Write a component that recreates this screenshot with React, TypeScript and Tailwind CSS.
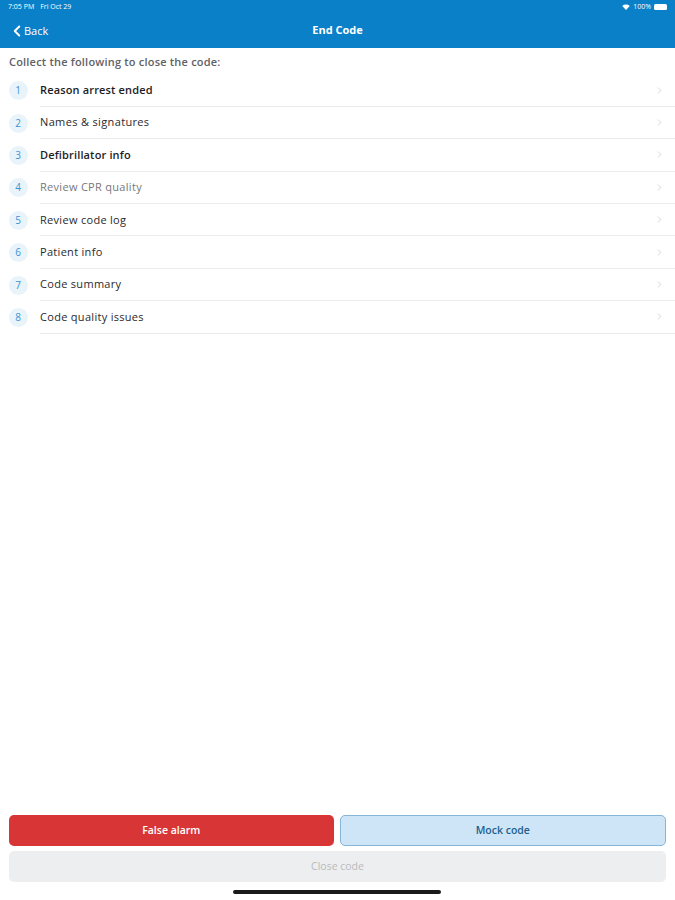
import React from 'react';
import { ChevronLeft, ChevronRight } from 'lucide-react';

const items = [
  { n: 1, label: 'Reason arrest ended', tone: 'font-semibold text-[#1d1d1f] tracking-[0.15px]' },
  { n: 2, label: 'Names & signatures', tone: 'font-medium text-[#2a2a2c] tracking-[0.35px]' },
  { n: 3, label: 'Defibrillator info', tone: 'font-semibold text-[#1d1d1f] tracking-[0.15px]' },
  { n: 4, label: 'Review CPR quality', tone: 'font-normal text-[#77787b] tracking-[0.3px]' },
  { n: 5, label: 'Review code log', tone: 'font-medium text-[#2a2a2c] tracking-[0.3px]' },
  { n: 6, label: 'Patient info', tone: 'font-medium text-[#2a2a2c] tracking-[0.3px]' },
  { n: 7, label: 'Code summary', tone: 'font-medium text-[#2a2a2c] tracking-[0.3px]' },
  { n: 8, label: 'Code quality issues', tone: 'font-medium text-[#2a2a2c] tracking-[0.3px]' },
];

const StatusBar = () => (
  <div className="h-[14px] flex items-center justify-between px-[8px] text-[7px] text-white">
    <div className="flex gap-[6px]">
      <span>7:05 PM</span>
      <span>Fri Oct 29</span>
    </div>
    <div className="flex items-center gap-[3px]">
      <svg width="8" height="6" viewBox="0 0 16 12">
        <path d="M8 12 L0.5 4 A11 11 0 0 1 15.5 4 Z" fill="white" />
      </svg>
      <span>100%</span>
      <div className="w-[13px] h-[6px] rounded-[1.5px] bg-white" />
    </div>
  </div>
);

export default function App() {
  return (
    <div className="w-[675px] h-[900px] bg-white flex flex-col relative overflow-hidden font-['Open_Sans',sans-serif]">
      <header className="bg-[#0a80c8] h-[48px] flex flex-col">
        <StatusBar />
        <div className="flex-1 relative flex items-center justify-center">
          <div className="absolute left-[8px] top-[8px] flex items-center text-white text-[11px]">
            <ChevronLeft className="w-[18px] h-[18px]" strokeWidth={2.6} />
            <span className="-ml-[2px]">Back</span>
          </div>
          <span className="text-white text-[11px] font-bold -mt-[1px]">End Code</span>
        </div>
      </header>

      <p className="px-[9px] pt-[6px] pb-[4px] text-[11px] font-semibold text-[#5f6166] tracking-[0.2px]">
        Collect the following to close the code:
      </p>

      <ul className="flex flex-col">
        {items.map((it) => (
          <li key={it.n} className="flex items-center h-[32.4px]">
            <div className="w-[40px] flex justify-center pr-[4px]">
              <span className="w-[19px] h-[19px] rounded-full bg-[#e9f3fa] text-[#3d94d3] text-[10px] flex items-center justify-center">
                {it.n}
              </span>
            </div>
            <div className="flex-1 h-full flex items-center border-b border-[#ececec]">
              <span className={`flex-1 text-[11px] ${it.tone}`}>{it.label}</span>
              <ChevronRight className="w-[11px] h-[11px] text-[#c9cacc] mr-[10px]" strokeWidth={1.6} />
            </div>
          </li>
        ))}
      </ul>

      <div className="flex-1" />

      <div className="px-[9px] flex flex-col gap-[5px] pb-[18px]">
        <div className="flex gap-[6px]">
          <button className="flex-1 h-[31px] rounded-[5px] bg-[#d83636] text-white text-[10.5px] font-semibold">
            False alarm
          </button>
          <button className="flex-1 h-[31px] rounded-[5px] bg-[#cde5f6] border border-[#83b6da] text-[#1d5f8e] text-[10.5px] font-semibold">
            Mock code
          </button>
        </div>
        <button className="h-[31px] rounded-[5px] bg-[#eceeef] text-[#b9bbbe] text-[10.5px]">
          Close code
        </button>
      </div>

      <div className="absolute bottom-[6px] left-[233px] w-[208px] h-[4px] rounded-full bg-[#1a1a1a]" />
    </div>
  );
}
